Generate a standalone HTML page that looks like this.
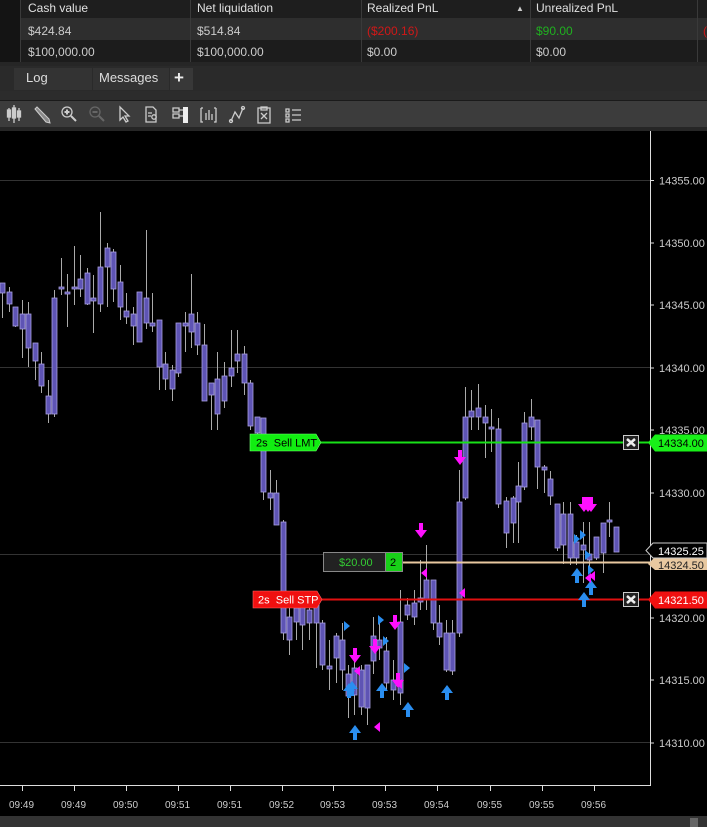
<!DOCTYPE html>
<html><head><meta charset="utf-8"><style>
*{margin:0;padding:0;box-sizing:border-box}
body{width:707px;height:827px;background:#000;overflow:hidden;font-family:"Liberation Sans",sans-serif;position:relative;color:#ddd}
.a{position:absolute}
.t{font-size:12px;position:absolute;white-space:nowrap}
</style></head><body>
<!-- table -->
<div class="a" style="left:0;top:0;width:707px;height:18px;background:#1e1e1e"></div>
<div class="a" style="left:0;top:18px;width:707px;height:22px;background:#2e2e2e"></div>
<div class="a" style="left:0;top:40px;width:707px;height:22px;background:#1c1c1c"></div>
<div class="a" style="left:0;top:62px;width:707px;height:4px;background:#262626"></div>
<div class="a" style="left:0;top:0;width:20px;height:62px;background:#141414"></div>
<div class="a" style="left:20px;top:0;width:1px;height:62px;background:#3a3a3a"></div>
<div class="a" style="left:190px;top:0;width:1px;height:62px;background:#3a3a3a"></div>
<div class="a" style="left:361px;top:0;width:1px;height:62px;background:#3a3a3a"></div>
<div class="a" style="left:530px;top:0;width:1px;height:62px;background:#3a3a3a"></div>
<div class="a" style="left:697px;top:0;width:1px;height:62px;background:#3a3a3a"></div>
<div class="t" style="left:28px;top:1px;color:#e0e0e0">Cash value</div>
<div class="t" style="left:197px;top:1px;color:#e0e0e0">Net liquidation</div>
<div class="t" style="left:367px;top:1px;color:#e0e0e0">Realized PnL</div>
<div class="t" style="left:516px;top:4px;color:#ccc;font-size:8px">▲</div>
<div class="t" style="left:536px;top:1px;color:#e0e0e0">Unrealized PnL</div>
<div class="t" style="left:28px;top:24px;color:#ccc">$424.84</div>
<div class="t" style="left:197px;top:24px;color:#ccc">$514.84</div>
<div class="t" style="left:367px;top:24px;color:#d01818">($200.16)</div>
<div class="t" style="left:536px;top:24px;color:#20b020">$90.00</div>
<div class="t" style="left:703px;top:24px;color:#d01818">(</div>
<div class="t" style="left:28px;top:45px;color:#ccc">$100,000.00</div>
<div class="t" style="left:197px;top:45px;color:#ccc">$100,000.00</div>
<div class="t" style="left:367px;top:45px;color:#ccc">$0.00</div>
<div class="t" style="left:536px;top:45px;color:#ccc">$0.00</div>
<!-- tabs -->
<div class="a" style="left:0;top:66px;width:707px;height:25px;background:#2a2a2a"></div>
<div class="a" style="left:14px;top:68px;width:78px;height:22px;background:#333"></div>
<div class="a" style="left:93px;top:68px;width:76px;height:22px;background:#333"></div>
<div class="a" style="left:170px;top:68px;width:23px;height:22px;background:#383838"></div>
<div class="t" style="left:26px;top:70px;font-size:13px;color:#ddd">Log</div>
<div class="t" style="left:99px;top:70px;font-size:13px;color:#ddd">Messages</div>
<div class="t" style="left:174px;top:68px;font-size:17px;color:#eee;font-weight:bold">+</div>
<div class="a" style="left:0;top:91px;width:707px;height:9px;background:#2c2c2c"></div>
<div class="a" style="left:0;top:100px;width:707px;height:1px;background:#1a1a1a"></div>
<div class="a" style="left:0;top:101px;width:707px;height:26px;background:#3c3c3c"></div>
<div class="a" style="left:0;top:127px;width:707px;height:4px;background:#262626"></div>
<svg class="a" style="left:0;top:101px" width="320" height="26" fill="none" stroke="#ccc" stroke-width="1.3">
<g stroke="#ccc"><path d="M9 7v13M14 4v18M19 7v13"/><rect x="7.5" y="9" width="3" height="7" fill="#ccc"/><rect x="12.5" y="7" width="3" height="10" fill="#ccc"/><rect x="17.5" y="10" width="3" height="6" fill="#ccc"/></g>
<path d="M35 8l2-2l12 12l1 4l-4-1z" fill="#888" stroke="#ccc" stroke-width="1"/>
<circle cx="67" cy="11" r="5"/><path d="M64.5 11h5M67 8.5v5M71 15l5 5" stroke-width="2"/>
<g stroke="#666"><circle cx="95" cy="11" r="5"/><path d="M92.5 11h5M99 15l5 5" stroke-width="2"/></g>
<path d="M120 6v13l3-3l3 5l2-1l-3-5h4z"/>
<path d="M146 6h7l3 3v12h-10z M148 12h4M148 15h3"/><circle cx="154" cy="16" r="2.2"/>
<path d="M173 7h6v4h-6zM173 13h6v4h-6zM179 9h4M179 15h4"/><rect x="183" y="6" width="5" height="16" fill="#eee" stroke="none"/>
<path d="M201 7v14h2M216 7v14h-2M201 7h2M216 7h-2M206 12v7M209 9v10M212 13v6"/>
<path d="M231 20l4-9l4 6l4-10" /><circle cx="231" cy="20" r="1.5"/><circle cx="243" cy="7" r="1.5"/>
<path d="M258 7h12v15h-12zM261 6h6v3h-6zM261 12l6 6M267 12l-6 6"/>
<path d="M286 8h3v3h-3zM286 13h3v3h-3zM286 18h3v3h-3zM292 9h9M292 14h9M292 19h9"/>
</svg>
<!-- chart -->
<svg class="a" style="left:0;top:0" width="707" height="827" id="ch">
<g stroke="#333" stroke-width="1"><path d="M0 180.5H650M0 367.5H650M0 554.5H650M0 742.5H650"/></g>
<g id="cd"></g>
<path d="M650.5 131V786M0 785.5H651" stroke="#ddd" stroke-width="1"/>
<g id="ax" fill="#ccc" font-size="11" font-family="Liberation Sans"></g>
<path d="M320 442.5H650" stroke="#18e018" stroke-width="2"/>
<path d="M320 599.5H650" stroke="#e01010" stroke-width="2"/>
<path d="M403 562.5H650" stroke="#e8c8a0" stroke-width="2"/>
<path d="M250 434h66l5 8.5l-5 8.5h-66z" fill="#11ee11" stroke="#7f7" stroke-width="0.6"/>
<text x="256" y="446.5" font-size="11" fill="#000" font-family="Liberation Sans" xml:space="preserve">2s  Sell LMT</text>
<path d="M253 591h64l5 8.5l-5 8.5h-64z" fill="#f01010" stroke="#f66" stroke-width="0.6"/>
<text x="258" y="603.5" font-size="11" fill="#fff" font-family="Liberation Sans" xml:space="preserve">2s  Sell STP</text>
<g stroke="#ccc" fill="#222"><rect x="623.5" y="435.5" width="15" height="14"/><rect x="623.5" y="592.5" width="15" height="14"/></g>
<g stroke="#eee" stroke-width="2.5"><path d="M627 439l8 7M635 439l-8 7M627 596l8 7M635 596l-8 7"/></g>
<path d="M648 442.5l7-8h52v17h-52z" fill="#18f018"/>
<text x="658" y="447" font-size="11" fill="#000" font-family="Liberation Sans">14334.00</text>
<path d="M648 599.5l7-8h52v17h-52z" fill="#f01010"/>
<text x="658" y="604" font-size="11" fill="#fff" font-family="Liberation Sans">14321.50</text>
<path d="M648 564l7-7h52v13h-52z" fill="#e8c8a0"/>
<text x="658" y="569" font-size="11" fill="#222" font-family="Liberation Sans">14324.50</text>
<path d="M646 550.5l7-7.5h54v15h-54z" fill="#000" stroke="#ccc"/>
<text x="658" y="555" font-size="11" fill="#fff" font-family="Liberation Sans">14325.25</text>
<rect x="323.5" y="552.5" width="62" height="19" fill="#222" stroke="#888"/>
<text x="339" y="566" font-size="11" fill="#3c3" font-family="Liberation Sans">$20.00</text>
<rect x="385.5" y="552.5" width="17" height="19" fill="#18d018" stroke="#888"/>
<text x="390" y="566" font-size="11" fill="#000" font-family="Liberation Sans">2</text>
<g id="mk"></g>
</svg>
<div class="a" style="left:0;top:816px;width:707px;height:11px;background:#333"></div>
<div class="a" style="left:690px;top:818px;width:8px;height:9px;background:#666"></div>
<script>
var C=[[2,283,293,283,318],[9,292,304,287,312],[15,307,326,307,327],[22,314,329,300,358],[28,314,348,302,367],[35,343,361,343,380],[41,364,386,352,393],[48,396,414,380,423],[54,298,414,290,417],[61,287,289,258,295],[67,292,293,274,327],[74,287,289,246,305],[80,279,289,255,297],[87,273,304,268,305],[93,298,301,275,333],[100,267,304,212,312],[107,248,267,243,307],[113,252,289,249,302],[120,282,307,265,320],[126,311,317,293,324],[133,314,326,307,345],[139,292,342,292,342],[146,298,323,230,329],[152,323,326,293,332],[159,320,367,320,390],[165,364,379,352,390],[172,370,389,365,401],[178,323,373,323,377],[185,323,326,312,352],[191,314,332,274,348],[197,323,345,312,355],[204,345,401,324,401],[211,383,395,383,430],[217,379,414,352,430],[224,376,401,362,408],[231,368,376,330,387],[237,354,361,330,373],[244,354,383,346,395],[250,383,426,380,430],[257,417,433,417,436],[263,418,492,418,500],[270,493,498,470,510],[276,493,525,480,525],[283,522,633,520,640],[289,617,640,600,655],[296,608,622,600,640],[302,600,625,598,650],[309,610,623,605,640],[316,605,623,600,668],[322,623,665,620,670],[329,666,669,640,690],[336,636,658,633,683],[342,640,670,623,690],[348,674,696,665,718],[354,668,695,660,715],[361,670,707,665,715],[367,665,708,665,725],[373,636,661,617,674],[379,640,648,620,660],[386,651,683,637,690],[393,680,690,660,700],[400,622,693,590,705],[407,605,615,598,620],[414,603,617,590,625],[420,598,602,560,610],[426,580,600,545,610],[433,580,623,580,630],[439,623,637,605,645],[446,633,670,620,672],[452,633,671,620,675],[459,502,633,470,637],[465,417,498,387,500],[471,411,417,390,430],[478,408,417,384,430],[485,417,423,405,458],[491,427,427,409,452],[498,429,504,418,508],[506,501,533,497,548],[513,498,523,496,543],[518,486,502,462,543],[524,423,487,412,490],[531,417,427,399,440],[537,420,467,420,489],[544,467,470,465,493],[550,479,496,471,505],[557,504,548,504,551],[563,514,545,502,564],[570,514,558,502,565],[576,542,558,535,565],[583,545,550,522,583],[589,554,560,522,572],[596,537,558,537,560],[603,523,553,523,573],[609,520,520,502,537],[616,527,552,527,552]];
var s='';C.forEach(function(c){var x=c[0];s+='<line x1="'+(x+.5)+'" x2="'+(x+.5)+'" y1="'+c[3]+'" y2="'+c[4]+'" stroke="#aaa"/>';var h=Math.max(c[2]-c[1],2);s+='<rect x="'+(x-2)+'" y="'+c[1]+'" width="5" height="'+h+'" fill="#5e54b4" stroke="#a8a0e0" stroke-width="0.8"/>';});
document.getElementById('cd').innerHTML=s;
var a='',p=[[14355,180.5],[14350,243],[14345,305],[14340,368],[14335,430],[14330,493],[14320,618],[14315,680],[14310,743]];
p.forEach(function(q){a+='<line x1="650" x2="654" y1="'+q[1]+'" y2="'+q[1]+'" stroke="#ddd"/><text x="659" y="'+(q[1]+4)+'">'+q[0]+'.00</text>';});
var tl=['09:49','09:49','09:50','09:51','09:51','09:52','09:53','09:53','09:54','09:55','09:55','09:56'],tx=[22,74,126,178,230,282,333,385,437,490,542,594];
tl.forEach(function(t,i){a+='<line x1="'+tx[i]+'.5" x2="'+tx[i]+'.5" y1="786" y2="791" stroke="#ddd"/><text x="'+(tx[i]-13)+'" y="808" font-size="10">'+t+'</text>';});
document.getElementById('ax').innerHTML=a;
function dn(x,y){return '<path d="M'+(x-2)+' '+(y-12)+'h4v7h4l-6 8l-6-8h4z" fill="#ff10ff"/>';}
function up(x,y){return '<path d="M'+(x-2)+' '+(y+10)+'h4v-7h4l-6-8l-6 8h4z" fill="#2a8ef0"/>';}
function tl_(x,y,c){return '<path d="M'+x+' '+y+'l6-5v10z" fill="'+c+'"/>';}
function tr(x,y,c){return '<path d="M'+(x+6)+' '+y+'l-6-5v10z" fill="'+c+'"/>';}
var m='';
[[460,462],[421,535],[355,660],[375,651],[395,627],[398,685],[588,509],[584,509],[591,509]].forEach(function(q){m+=dn(q[0],q[1]);});
[[355,730],[349,688],[382,688],[408,707],[447,690],[577,573],[591,585],[584,597],[352,686]].forEach(function(q){m+=up(q[0],q[1]);});
m+=tl_(421,573,'#ff10ff')+tl_(459,593,'#ff10ff')+tl_(374,727,'#ff10ff')+tl_(354,671,'#ff10ff')+tl_(396,684,'#ff10ff')+tl_(585,578,'#ff10ff')+tl_(589,576,'#ff10ff');
m+=tr(344,626,'#2a8ef0')+tr(378,620,'#2a8ef0')+tr(383,641,'#2a8ef0')+tr(404,668,'#2a8ef0')+tr(574,539,'#2a8ef0')+tr(580,535,'#2a8ef0')+tr(585,555,'#2a8ef0')+tr(588,570,'#2a8ef0');
document.getElementById('mk').innerHTML=m;
</script>
</body></html>
